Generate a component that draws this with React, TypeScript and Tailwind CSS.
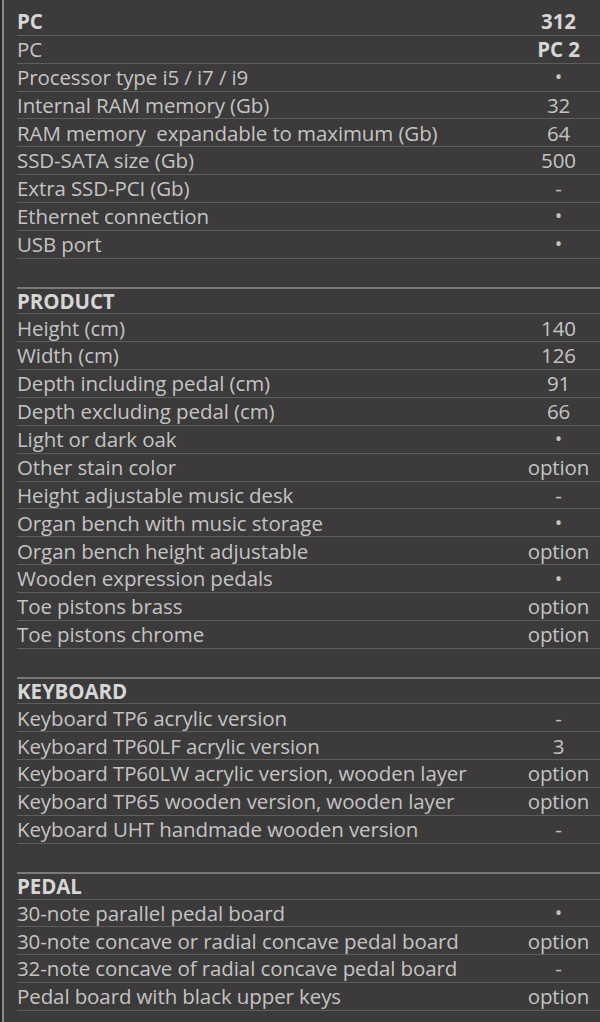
import React from 'react';

type Row = { label: string; value?: string; head?: boolean; boldValue?: boolean };

const sections: Row[][] = [
  [
    { label: 'PC', value: '312', head: true },
    { label: 'PC', value: 'PC 2', boldValue: true },
    { label: 'Processor type i5 / i7 / i9', value: '•' },
    { label: 'Internal RAM memory (Gb)', value: '32' },
    { label: 'RAM memory  expandable to maximum (Gb)', value: '64' },
    { label: 'SSD-SATA size (Gb)', value: '500' },
    { label: 'Extra SSD-PCI (Gb)', value: '-' },
    { label: 'Ethernet connection', value: '•' },
    { label: 'USB port', value: '•' },
  ],
  [
    { label: 'PRODUCT', head: true },
    { label: 'Height (cm)', value: '140' },
    { label: 'Width (cm)', value: '126' },
    { label: 'Depth including pedal (cm)', value: '91' },
    { label: 'Depth excluding pedal (cm)', value: '66' },
    { label: 'Light or dark oak', value: '•' },
    { label: 'Other stain color', value: 'option' },
    { label: 'Height adjustable music desk', value: '-' },
    { label: 'Organ bench with music storage', value: '•' },
    { label: 'Organ bench height adjustable', value: 'option' },
    { label: 'Wooden expression pedals', value: '•' },
    { label: 'Toe pistons brass', value: 'option' },
    { label: 'Toe pistons chrome', value: 'option' },
  ],
  [
    { label: 'KEYBOARD', head: true },
    { label: 'Keyboard TP6 acrylic version', value: '-' },
    { label: 'Keyboard TP60LF acrylic version', value: '3' },
    { label: 'Keyboard TP60LW acrylic version, wooden layer', value: 'option' },
    { label: 'Keyboard TP65 wooden version, wooden layer', value: 'option' },
    { label: 'Keyboard UHT handmade wooden version', value: '-' },
  ],
  [
    { label: 'PEDAL', head: true },
    { label: '30-note parallel pedal board', value: '•' },
    { label: '30-note concave or radial concave pedal board', value: 'option' },
    { label: '32-note concave of radial concave pedal board', value: '-' },
    { label: 'Pedal board with black upper keys', value: 'option' },
  ],
];

const SpecRow: React.FC<{ row: Row; topThick?: boolean }> = ({ row, topThick }) => {
  const border = topThick ? 'border-t-2 border-t-[#7b7979]' : '';
  const tone = row.head ? 'font-bold text-[#d6d6d6]' : 'text-[#c4c4c4]';
  const valueTone = row.head || row.boldValue ? 'font-bold text-[#d6d6d6]' : 'text-[#c4c4c4]';
  return (
    <div className={`flex h-[27.87px] ${border}`}>
      <div className={`flex-1 flex items-center whitespace-pre border-b border-[#5f5d5d] leading-none ${tone}`}>
        {row.label}
      </div>
      <div className={`w-[83px] flex items-center justify-center border-b border-[#5f5d5d] leading-none ${valueTone}`}>
        {row.value === '•' ? <span className="text-[20px]">•</span> : row.value}
      </div>
    </div>
  );
};

export default function App() {
  return (
    <div
      className="w-[600px] h-[1022px] bg-[#3c3a3a] flex overflow-hidden"
      style={{ fontFamily: '"Open Sans", Lato, sans-serif' }}
    >
      <div className="w-[2px] bg-[#2a2828]" />
      <div className="w-[2px] bg-[#8a8888]" />
      <div className="flex-1 pl-[13px] pt-[8px] text-[20.5px] tracking-[-0.1px]">
        {sections.map((sec, si) => (
          <div key={si}>
            {sec.map((row, ri) => (
              <SpecRow key={ri} row={row} topThick={si > 0 && ri === 0} />
            ))}
            {si < sections.length - 1 && <div className="h-[27.87px]" />}
          </div>
        ))}
      </div>
    </div>
  );
}
